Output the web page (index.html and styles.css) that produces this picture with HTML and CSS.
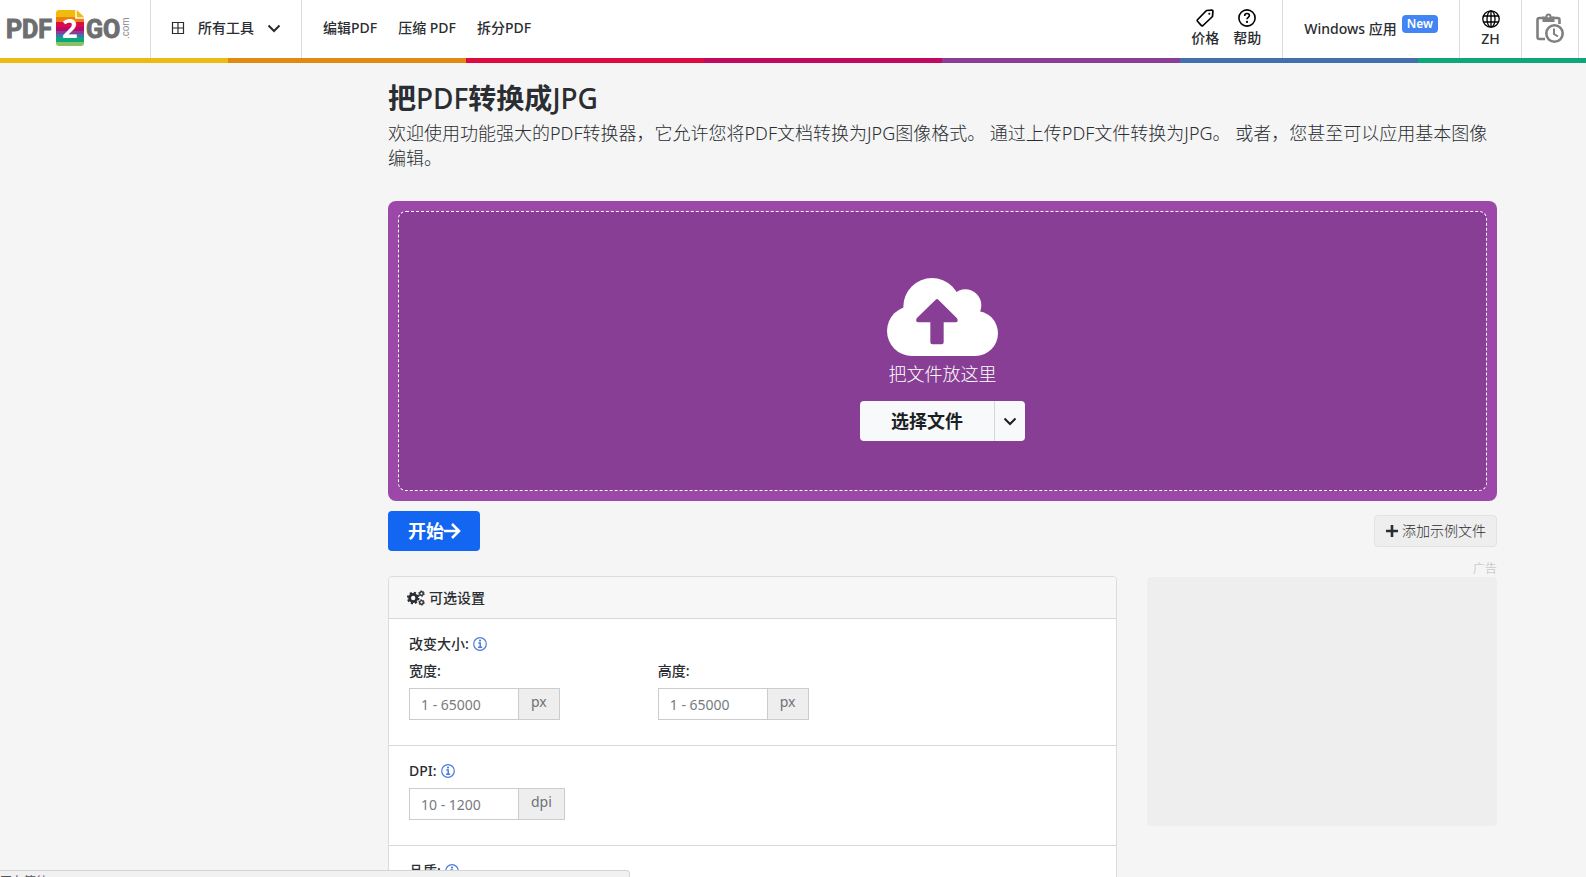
FILE: index.html
```html
<!DOCTYPE html>
<html lang="zh-CN">
<head>
<meta charset="utf-8">
<meta name="viewport" content="width=device-width, initial-scale=1">
<title>把PDF转换成JPG</title>
<link rel="stylesheet" href="styles.css">
</head>
<body>
<svg class="sprite" aria-hidden="true">
  <symbol id="info" viewBox="0 0 16 16">
    <circle cx="8" cy="8" r="6.3" fill="none" stroke="currentColor" stroke-width="1.2"/>
    <path d="M6.300 7H8.200v4M6 11.300h4.200" fill="none" stroke="currentColor" stroke-width="1.5"/>
    <circle cx="8" cy="4.600" r="1.100" fill="currentColor"/>
  </symbol>
</svg>
<header class="header">
  <a class="logo" href="#" aria-label="PDF2GO.com">
    <svg width="126" height="40" viewBox="6 8 126 40">
      <defs><clipPath id="page"><path d="M59 10H77L84 17V43a3 3 0 0 1-3 3H59a3 3 0 0 1-3-3V13a3 3 0 0 1 3-3z"/></clipPath></defs>
      <text class="logo-word" x="6" y="38">PDF</text>
      <g clip-path="url(#page)">
        <path fill="#f2b90f" d="M56 10h28v8H56z"/>
        <path fill="#e9820f" d="M56 17h28v6H56z"/>
        <path fill="#dd0a45" d="M56 22h28v6H56z"/>
        <path fill="#b9096c" d="M56 27h28v5H56z"/>
        <path fill="#873e94" d="M56 31h28v3H56z"/>
        <path fill="#3f72b5" d="M56 34h28v4H56z"/>
        <path fill="#0ca67c" d="M56 37h28v5H56z"/>
        <path fill="#8cc060" d="M56 42h28v4H56z"/>
      </g>
      <path d="M76 10V18H84" fill="none" stroke="#fff" stroke-width="1.5"/>
      <path d="M77 11v6h6z" fill="#f2b90f"/>
      <text class="logo-digit" x="62" y="38">2</text>
      <text class="logo-word" x="86" y="38">GO</text>
      <text class="logo-tld" transform="translate(129 39) rotate(-90)">.com</text>
    </svg>
  </a>
  <button class="tools" type="button">
    <svg width="14" height="14" viewBox="0 0 14 14" fill="none" stroke="currentColor" stroke-width="1.2"><path d="M1.5 1.5h11v11h-11zM7 1.5v11M1.5 7h11"/></svg>
    <span>所有工具</span>
    <svg width="14" height="14" viewBox="0 0 14 14" fill="none" stroke="currentColor" stroke-width="2"><path d="M1.5 4.5 7 10l5.500-5.500"/></svg>
  </button>
  <nav class="links">
    <a href="#">编辑PDF</a>
    <a href="#">压缩 PDF</a>
    <a href="#">拆分PDF</a>
  </nav>
  <nav class="support">
    <a class="stacked" href="#">
      <svg width="18" height="18" viewBox="0 0 18 18" fill="none" stroke="#000" stroke-width="1.7" stroke-linejoin="round"><path d="M10.500 1.500 16 1.200Q17 1.200 16.900 2.200L16.500 7.500 7 16.500Q6 17.200 5.200 16.400L1.500 12.300Q.9 11.400 1.700 10.500z"/><circle cx="13.300" cy="4.800" r="1" fill="#000" stroke="none"/></svg>
      <span>价格</span>
    </a>
    <a class="stacked" href="#">
      <svg width="18" height="18" viewBox="0 0 18 18" fill="none" stroke="#000" stroke-width="1.600"><circle cx="9" cy="9" r="8.100"/><path d="M6.700 7V6.700C6.700 5.300 7.700 4.500 9 4.500s2.400.8 2.400 2.100c0 1.800-2.400 1.700-2.400 3.600"/><circle cx="9" cy="12.900" r="1.100" fill="#000" stroke="none"/></svg>
      <span>帮助</span>
    </a>
  </nav>
  <a class="windows" href="#"><span>Windows 应用</span><span class="badge">New</span></a>
  <button class="stacked language" type="button">
    <svg width="18" height="18" viewBox="0 0 18 18" fill="none" stroke="#000" stroke-width="1.300"><circle cx="9" cy="9" r="8.200"/><ellipse cx="9" cy="9" rx="4" ry="8.200"/><path d="M9 1v16M1.500 6h15M1.500 12h15"/></svg>
    <span>ZH</span>
  </button>
  <button class="history" type="button" aria-label="历史记录">
    <svg width="28" height="30" viewBox="0 0 28 30" fill="none" stroke="#808080" stroke-width="2.600"><path d="M8 5H3.500Q1.500 5 1.500 7V24Q1.500 26 3.500 26H9M16 5h5.500Q23.500 5 23.500 7v4"/><path d="M6.500 3.500h3a3 3 0 0 1 6 0h3V9h-12z" fill="#808080" stroke="none"/><circle cx="12.500" cy="3.500" r="1" fill="#fff" stroke="none"/><circle cx="18.500" cy="20.500" r="8.200"/><path d="M18 15.500v5.500l4 2.500" stroke-width="2"/></svg>
  </button>
</header>
<div class="rainbow"></div>

<div class="page">
  <main class="content">
    <h1><b>把</b>PDF<b>转换成</b>JPG</h1>
    <p class="intro">欢迎使用功能强大的PDF转换器，它允许您将PDF文档转换为JPG图像格式。 通过上传PDF文件转换为JPG。 或者，您甚至可以应用基本图像编辑。</p>

    <section class="dropzone">
      <div class="dropzone-inner">
        <svg class="cloud" width="111" height="78" viewBox="143 56 333 234">
          <g fill="#fff"><circle cx="218" cy="215" r="75"/><circle cx="278" cy="142" r="86"/><circle cx="378" cy="138" r="48"/><circle cx="408" cy="222" r="68"/><path d="M218 160h190v130H218z"/></g>
          <path d="M289 121q4-4 8 0l56 56q6 11-4 12h-36v60q0 6-6 6h-28q-6 0-6-6v-60h-36q-10-1-5-12z" fill="#873e94"/>
        </svg>
        <p class="drop-text">把文件放这里</p>
        <div class="picker">
          <button class="pick" type="button">选择文件</button>
          <button class="pick-more" type="button" aria-label="更多来源"><svg width="14" height="14" viewBox="0 0 14 14" fill="none" stroke="currentColor" stroke-width="2"><path d="M1.500 4.500 7 10l5.500-5.500"/></svg></button>
        </div>
      </div>
    </section>

    <div class="actions">
      <button class="start" type="button">开始<svg width="17" height="18" viewBox="0 0 17 18" fill="none" stroke="currentColor" stroke-width="2.600"><path d="M0 9h15M8 2l7 7-7 7"/></svg></button>
      <button class="sample" type="button"><svg width="12" height="12" viewBox="0 0 12 12"><path d="M4.700 0h2.600v4.700H12v2.600H7.300V12H4.700V7.300H0V4.700h4.700z" fill="currentColor"/></svg>添加示例文件</button>
    </div>

    <div class="columns">
      <form class="card">
        <h2 class="card-title">
          <svg width="18" height="16" viewBox="0 0 18 16" fill="none" stroke="currentColor"><circle cx="6.200" cy="8" r="3.600" stroke-width="2.800"/><circle cx="6.200" cy="8" r="5.400" stroke-width="1.800" stroke-dasharray="2.200 2.040"/><circle cx="14.500" cy="3.600" r="1.800" stroke-width="1.400"/><circle cx="14.500" cy="3.600" r="2.800" stroke-width="1" stroke-dasharray="1.400 1.530"/><circle cx="14.500" cy="12.400" r="1.800" stroke-width="1.400"/><circle cx="14.500" cy="12.400" r="2.800" stroke-width="1" stroke-dasharray="1.400 1.530"/></svg>
          可选设置
        </h2>
        <fieldset class="group">
          <legend class="label">改变大小: <svg class="info"><use href="#info"/></svg></legend>
          <div class="fields">
            <div class="field">
              <label class="label" for="width">宽度:</label>
              <div class="input-group"><input id="width" type="text" placeholder="1 - 65000"><span class="unit">px</span></div>
            </div>
            <div class="field">
              <label class="label" for="height">高度:</label>
              <div class="input-group"><input id="height" type="text" placeholder="1 - 65000"><span class="unit">px</span></div>
            </div>
          </div>
        </fieldset>
        <div class="group">
          <label class="label" for="dpi">DPI: <svg class="info"><use href="#info"/></svg></label>
          <div class="input-group"><input id="dpi" type="text" placeholder="10 - 1200"><span class="unit">dpi</span></div>
        </div>
        <div class="group">
          <span class="label">品质: <svg class="info"><use href="#info"/></svg></span>
        </div>
      </form>
      <aside class="ad">
        <span class="ad-label">广告</span>
        <div class="ad-box"></div>
      </aside>
    </div>
  </main>
</div>
<div class="status">正在等待</div>
</body>
</html>
```
FILE: styles.css
```css
* { box-sizing: border-box; }
body {
  margin: 0;
  height: 100vh;
  overflow: hidden;
  background: #f5f5f5;
  color: #2a2d31;
  font: 14px/20px "Noto Sans", "Noto Sans CJK SC", sans-serif;
}
button, input { font: inherit; color: inherit; }
button { border: 0; background: none; padding: 0; cursor: pointer; }
a { color: inherit; text-decoration: none; }
h1, h2, p, fieldset, legend { margin: 0; padding: 0; border: 0; }
svg { flex: none; }
.sprite { position: absolute; width: 0; height: 0; }

.header { display: flex; height: 58px; background: #fff; font-weight: 500; }
.header > * { display: flex; align-items: center; padding-bottom: 2px; }
.logo { width: 151px; padding-left: 6px; border-right: 1px solid #dcdce0; }
.logo-word { font: bold 25px Roboto, "Noto Sans", sans-serif; fill: #6d6e70; stroke: #6d6e70; }
.logo-digit { font: bold 27px "Noto Sans", sans-serif; fill: #fff; }
.logo-tld { font: 10px "Liberation Sans", sans-serif; fill: #8d8e90; }
.tools { width: 151px; padding-left: 20px; gap: 13px; border-right: 1px solid #dcdce0; }
.links { flex: 1; padding-left: 21px; gap: 21px; white-space: nowrap; }
.support { gap: 14px; padding-right: 21px; }
.header .stacked { display: flex; flex-direction: column; justify-content: center; align-items: center; gap: 1px; padding-bottom: 0; }
.windows { border-left: 1px solid #dcdce0; padding: 0 21px; gap: 5px; white-space: nowrap; }
.badge { margin-bottom: 10px; padding: 0 5px; border-radius: 4px; background: #4285f4; color: #fff; font-size: 12px; line-height: 18px; font-weight: 600; }
.language { width: 62px; border-left: 1px solid #dcdce0; }
.history { width: 58px; margin-right: 7px; justify-content: center; border: solid #dcdce0; border-width: 0 1px; }
.rainbow {
  height: 5px;
  background: linear-gradient(90deg, #ebbb13 14.4%, #e08a10 0 29.4%, #dc0a40 0 44.4%, #c0095f 0 59.4%, #873e94 0 74.4%, #436fad 0 89.4%, #10a67b 0);
}

.page { display: grid; grid-template-columns: minmax(0, 1fr); padding: 0 89px 0 388px; }
h1 { padding-top: 16px; font-size: 28px; line-height: 38px; font-weight: 500; }
h1 b { font-weight: 700; }
.intro { padding-top: 4px; font-size: 18px; line-height: 25px; font-weight: 300; }

.dropzone { margin-top: 30px; height: 300px; padding: 10px; border-radius: 8px; background: #9b48a9; }
.dropzone-inner { height: 100%; display: flex; flex-direction: column; align-items: center; justify-content: center; padding-top: 17px; border: 1px dashed #fff; border-radius: 8px; background: #873e94; color: #fff; }
.drop-text { font-size: 18px; line-height: 24px; padding: 6px 0 15px; font-weight: 300; }
.picker { display: flex; height: 40px; border-radius: 4px; background: #f8f9fa; color: #1c1f23; overflow: hidden; }
.pick { width: 134px; font-size: 18px; font-weight: 700; }
.pick-more { width: 31px; display: flex; align-items: center; justify-content: center; border-left: 1px solid #d5d7d9; }

.actions { display: flex; justify-content: space-between; align-items: center; margin-top: 10px; }
.start { display: flex; align-items: center; height: 40px; padding: 0 19px 0 20px; border-radius: 4px; background: #1266f1; color: #fff; font-size: 18px; font-weight: 700; }
.sample { display: flex; align-items: center; gap: 4px; height: 32px; padding: 0 10px 0 11px; border: 1px solid #e0e3e4; border-radius: 4px; background: #eee; font-weight: 300; }

.columns { display: grid; grid-template-columns: minmax(0, 1fr) 350px; gap: 30px; align-items: start; }
.card { margin-top: 25px; border: 1px solid #dcdcde; border-radius: 4px; background: #fff; font-weight: 500; }
.card-title { display: flex; align-items: center; gap: 4px; height: 42px; padding-left: 18px; border-bottom: 1px solid #d8d8da; border-radius: 4px 4px 0 0; background: #f7f7f7; font-size: 14px; font-weight: 500; }
.group { padding: 15px 20px 25px; }
.group + .group { border-top: 1px solid #d8d8da; }
.label { display: flex; align-items: center; gap: 3px; height: 20px; margin-bottom: 7px; }
fieldset.group > legend { float: left; }
.info { width: 16px; height: 16px; color: #4c7bdc; }
.fields { clear: both; display: flex; gap: 98px; }
.input-group { display: flex; width: max-content; height: 32px; border: 1px solid #ccc; color: #6d7278; font-weight: 400; }
.input-group input { width: 109px; padding: 2px 0 0 11px; border: 0; border-right: 1px solid #ccc; background: #fff; }
.input-group input::placeholder { color: #757b80; opacity: 1; }
.unit { padding: 3px 12px; background: #eee; }
.ad { display: flex; flex-direction: column; padding-top: 10px; }
.ad-label { align-self: flex-end; color: #bbb; font-size: 12px; line-height: 16px; font-weight: 300; }
.ad-box { height: 249px; border-radius: 4px; background: #eee; }

.status { position: fixed; left: 0; bottom: 0; width: 630px; height: 7px; overflow: hidden; padding-top: 4px; border: solid #d4d4d4; border-width: 1px 1px 0 0; border-radius: 0 4px 0 0; background: #f1f1f1; color: #555; font-size: 12px; line-height: 14px; }
```
